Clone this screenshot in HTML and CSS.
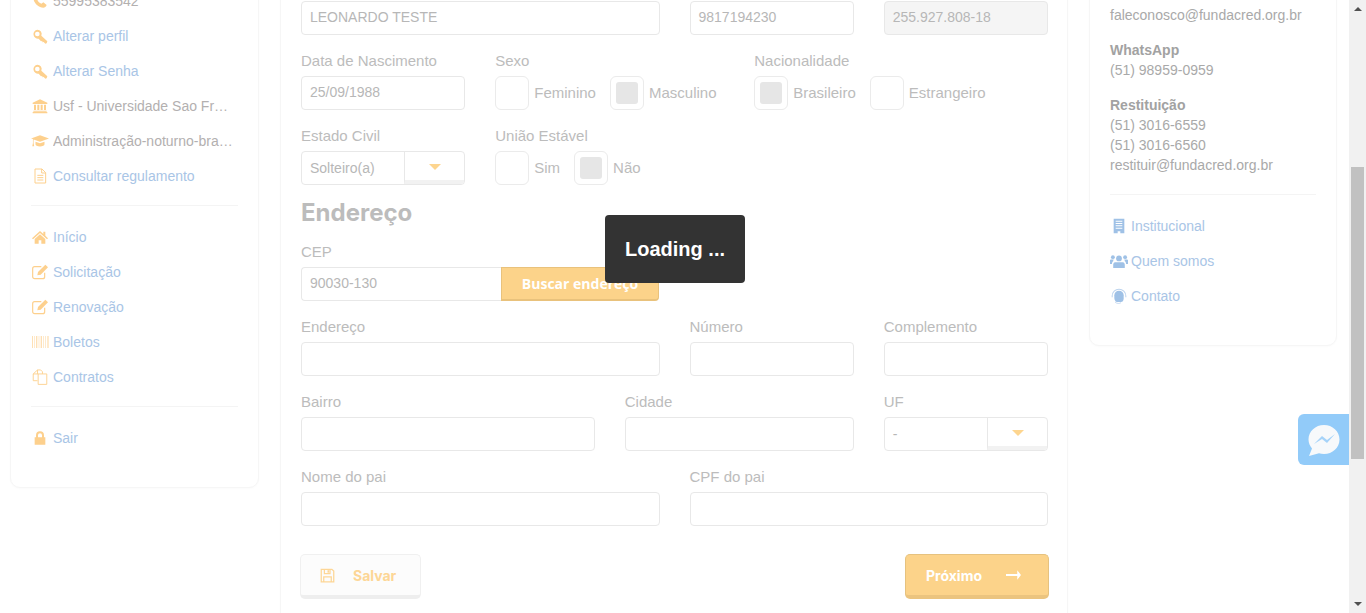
FILE: index.html
```html
<!DOCTYPE html>
<html lang="pt-BR">
<head>
    <meta charset="UTF-8">
    <title>Fundacred - Cadastro</title>
    <link rel="stylesheet" href="styles.css">
</head>
<body>
    <svg class="icon-defs" width="0" height="0">
        <symbol id="i-phone" viewBox="0 0 24 24"><path d="M6 2l4 5-2 3c1 3 3 5 6 6l3-2 5 4c-1 3-3 4-5 4C9 22 2 14 2 7c0-2 2-4 4-5z"/></symbol>
        <symbol id="i-key" viewBox="0 0 24 24"><path d="M8 1.5a6.5 6.5 0 0 1 6 9l9 8.500-1 3-2 .5-2.500-2.500-2 .5v-2l-2 .5-3.500-4A6.500 6.500 0 1 1 8 1.500zm0 3a3.500 3.500 0 1 0 0 7 3.500 3.500 0 0 0 0-7z" transform="translate(0 1)" fill-rule="evenodd"/></symbol>
        <symbol id="i-bank" viewBox="0 0 24 24"><path d="M12 2l11 5v2H1V7zM3 10h3v8H3zm5 0h3v8H8zm5 0h3v8h-3zm5 0h3v8h-3zM2 19h20v1.500H2zM1 21h22v2H1z"/></symbol>
        <symbol id="i-cap" viewBox="0 0 28 24"><path d="M14 3l14 5-14 5-10-3.500V15l1 5H2l1-5V9L0 8zM7 13l7 2.500 7-2.500v4c0 2-3 3.500-7 3.500S7 19 7 17z"/></symbol>
        <symbol id="i-doc" viewBox="0 0 24 24"><path d="M4.500 1.500H15L20.500 7v15.500h-16zM14.500 1.500V7.500h6M8 11h9M8 14.500h9M8 18h9" fill="none" stroke="currentColor" stroke-width="1.500"/></symbol>
        <symbol id="i-home" viewBox="0 0 24 24"><path d="M12 3l5 4.500V4h3v6.200l4 3.500-1.500 1.500L12 6 1.500 15.200 0 13.700zM4 15l8-7 8 7v7h-6v-5h-4v5H4z"/></symbol>
        <symbol id="i-edit" viewBox="0 0 26 24"><path d="M20 13v6a3 3 0 0 1-3 3H5a3 3 0 0 1-3-3V7a3 3 0 0 1 3-3h10" fill="none" stroke="currentColor" stroke-width="1.800"/><path d="M21 1l4 4-11 11-5 1 1-5z"/></symbol>
        <symbol id="i-barcode" viewBox="0 0 26 24"><path d="M1 3h1.500v18H1zm3 0h1v18H4zm3 0h2v18H7zm4 0h1v18h-1zm3 0h2v18h-2zm4 0h1v18h-1zm3 0h1v18h-1zm3 0h2v18h-2z" opacity=".65"/></symbol>
        <symbol id="i-files" viewBox="0 0 26 26"><path d="M9 1.500h5l3 3V8M9 1.500L2 8v11h7M9 1.500V8H2M9 8h9l6 0v17H10V8" fill="none" stroke="currentColor" stroke-width="1.500"/></symbol>
        <symbol id="i-lock" viewBox="0 0 24 24"><path d="M6 11V8a6 6 0 0 1 12 0v3h2v11H4V11zm3 0h6V8a3 3 0 0 0-6 0z" fill-rule="evenodd"/></symbol>
        <symbol id="i-building" viewBox="0 0 24 24"><path d="M4 1h16v22h-6v-3h-4v3H4zm3 3v1.500h10V4zm0 3.500V9h10V7.500zM7 11v1.500h10V11zm0 3.500V16h10v-1.500z" fill-rule="evenodd"/></symbol>
        <symbol id="i-users" viewBox="0 0 28 24"><circle cx="14" cy="8" r="4.500"/><circle cx="4.500" cy="6" r="3"/><circle cx="23.500" cy="6" r="3"/><path d="M8 14h12c2 0 3 2 3 4v5H5v-5c0-2 1-4 3-4zM0 11c0-1 1-1.500 2-1.500h4c-1 1-1 2-1 3-1 .5-2 2-2 4H0zM28 11c0-1-1-1.500-2-1.500h-4c1 1 1 2 1 3 1 .5 2 2 2 4h3z"/></symbol>
        <symbol id="i-headset" viewBox="0 0 24 24"><path d="M12 1a11 11 0 0 1 11 11v2h-1.500v-2a9.500 9.500 0 0 0-19 0v2H1v-2A11 11 0 0 1 12 1z" opacity=".7"/><path d="M12 4a7 7 0 0 1 7 7v5c0 3-2 5-4 5h-6c-2 0-4-3-4-6v-4a7 7 0 0 1 7-7z"/><path d="M6 21c3 3 7 2.500 9 1" fill="none" stroke="currentColor" stroke-width="1.200" opacity=".7"/></symbol>
        <symbol id="i-save" viewBox="0 0 24 24"><path d="M2 2h17l3 3v17H2zM7 2v7h9V2M6 22v-8h12v8" fill="none" stroke="currentColor" stroke-width="2"/><path d="M12 3.500h2.500v4H12z"/></symbol>
    </svg>

    <div class="page">
        <div class="columns">
            <aside class="card side-left">
                <a class="nav-row muted"><svg class="nav-icon"><use href="#i-phone"/></svg><span>55995383542</span></a>
                <a class="nav-row"><svg class="nav-icon"><use href="#i-key"/></svg><span>Alterar perfil</span></a>
                <a class="nav-row"><svg class="nav-icon"><use href="#i-key"/></svg><span>Alterar Senha</span></a>
                <a class="nav-row muted"><svg class="nav-icon"><use href="#i-bank"/></svg><span>Usf - Universidade Sao Francisco</span></a>
                <a class="nav-row muted"><svg class="nav-icon"><use href="#i-cap"/></svg><span>Administração-noturno-bragança</span></a>
                <a class="nav-row"><svg class="nav-icon"><use href="#i-doc"/></svg><span>Consultar regulamento</span></a>
                <hr class="divider">
                <a class="nav-row"><svg class="nav-icon"><use href="#i-home"/></svg><span>Início</span></a>
                <a class="nav-row"><svg class="nav-icon"><use href="#i-edit"/></svg><span>Solicitação</span></a>
                <a class="nav-row"><svg class="nav-icon"><use href="#i-edit"/></svg><span>Renovação</span></a>
                <a class="nav-row"><svg class="nav-icon"><use href="#i-barcode"/></svg><span>Boletos</span></a>
                <a class="nav-row"><svg class="nav-icon"><use href="#i-files"/></svg><span>Contratos</span></a>
                <hr class="divider">
                <a class="nav-row"><svg class="nav-icon"><use href="#i-lock"/></svg><span>Sair</span></a>
            </aside>

            <main class="card form-card">
                <div class="form-row">
                    <div class="field span-6"><div class="input">LEONARDO TESTE</div></div>
                    <div class="field span-3"><div class="input">9817194230</div></div>
                    <div class="field span-3"><div class="input disabled">255.927.808-18</div></div>
                </div>
                <div class="form-row">
                    <div class="field span-3"><label>Data de Nascimento</label><div class="input">25/09/1988</div></div>
                    <div class="field span-4">
                        <label>Sexo</label>
                        <div class="radios">
                            <span class="radio"></span><span class="radio-text">Feminino</span>
                            <span class="radio checked"></span><span class="radio-text">Masculino</span>
                        </div>
                    </div>
                    <div class="field span-5">
                        <label>Nacionalidade</label>
                        <div class="radios">
                            <span class="radio checked"></span><span class="radio-text">Brasileiro</span>
                            <span class="radio"></span><span class="radio-text">Estrangeiro</span>
                        </div>
                    </div>
                </div>
                <div class="form-row">
                    <div class="field span-3">
                        <label>Estado Civil</label>
                        <div class="select"><span class="select-value">Solteiro(a)</span><span class="select-btn"><i class="caret"></i></span></div>
                    </div>
                    <div class="field span-9">
                        <label>União Estável</label>
                        <div class="radios">
                            <span class="radio"></span><span class="radio-text">Sim</span>
                            <span class="radio checked"></span><span class="radio-text">Não</span>
                        </div>
                    </div>
                </div>

                <h2 class="section-title">Endereço</h2>

                <div class="form-row">
                    <div class="field span-6">
                        <label>CEP</label>
                        <div class="cep-group">
                            <div class="input">90030-130</div>
                            <button class="btn-search">Buscar endereço</button>
                        </div>
                    </div>
                </div>
                <div class="form-row">
                    <div class="field span-6"><label>Endereço</label><div class="input"></div></div>
                    <div class="field span-3"><label>Número</label><div class="input"></div></div>
                    <div class="field span-3"><label>Complemento</label><div class="input"></div></div>
                </div>
                <div class="form-row">
                    <div class="field span-5"><label>Bairro</label><div class="input"></div></div>
                    <div class="field span-4"><label>Cidade</label><div class="input"></div></div>
                    <div class="field span-3">
                        <label>UF</label>
                        <div class="select"><span class="select-value">-</span><span class="select-btn"><i class="caret"></i></span></div>
                    </div>
                </div>
                <div class="form-row">
                    <div class="field span-6"><label>Nome do pai</label><div class="input"></div></div>
                    <div class="field span-6"><label>CPF do pai</label><div class="input"></div></div>
                </div>

                <div class="form-actions">
                    <button class="btn btn-save"><svg class="btn-icon"><use href="#i-save"/></svg>Salvar</button>
                    <button class="btn btn-next">Próximo
                        <svg class="btn-arrow" viewBox="0 0 16 10"><path d="M0 4h12V0l4 5-4 5V6H0z"/></svg>
                    </button>
                </div>
            </main>

            <aside class="card side-right">
                <p class="info-line">faleconosco@fundacred.org.br</p>
                <div class="info-block">
                    <p class="info-title">WhatsApp</p>
                    <p class="info-line">(51) 98959-0959</p>
                </div>
                <div class="info-block">
                    <p class="info-title">Restituição</p>
                    <p class="info-line">(51) 3016-6559</p>
                    <p class="info-line">(51) 3016-6560</p>
                    <p class="info-line">restituir@fundacred.org.br</p>
                </div>
                <hr class="divider divider-info">
                <a class="nav-row blue"><svg class="nav-icon"><use href="#i-building"/></svg><span>Institucional</span></a>
                <a class="nav-row blue"><svg class="nav-icon"><use href="#i-users"/></svg><span>Quem somos</span></a>
                <a class="nav-row blue"><svg class="nav-icon"><use href="#i-headset"/></svg><span>Contato</span></a>
            </aside>
        </div>

        <div class="scrollbar">
            <i class="arrow-up"></i>
            <div class="scroll-thumb"></div>
            <i class="arrow-down"></i>
        </div>
    </div>

    <div class="chat-btn">
        <svg width="32" height="32" viewBox="0 0 32 32">
            <path d="M16 1c8.500 0 15.500 6.300 15.500 14.500S24.500 30 16 30c-1.800 0-3.500-.3-5-.8L1 32l3-7.500C2 22 .5 19 .5 15.500 .5 7.300 7.500 1 16 1z" fill="#f7f9fb"/>
            <path d="M6 20l8-8 5 4 8-6-8 9-5-4z" fill="#a6d3f9"/>
        </svg>
    </div>

    <div class="loading">Loading ...</div>
</body>
</html>
```
FILE: styles.css
```css
* { box-sizing: border-box; }

html, body {
    margin: 0;
    height: 613px;
    overflow: hidden;
}
body {
    background: #fff;
    font-family: "Liberation Sans", Arial, sans-serif;
    font-size: 14px;
    color: #b5b5b5;
}
.icon-defs { position: absolute; }

.page {
    display: flex;
    height: 613px;
}
.columns {
    flex: 1;
    display: flex;
    align-items: flex-start;
    gap: 21px;
    padding: 0 11px 0 10px;
    margin-top: -30px;
    min-width: 0;
}

/* cards */
.card {
    background: #fff;
    border: 1px solid #f6f6f6;
    border-radius: 10px;
    box-shadow: 0 1px 2px rgba(0, 0, 0, 0.02);
}
.side-left {
    width: 249px;
    flex: none;
    padding: 12px 20px 32px;
}
.side-right {
    width: 248px;
    flex: none;
    padding: 34px 20px 32px;
}
.form-card {
    width: 788px;
    flex: none;
    height: 700px;
    padding: 30px 20px 0;
    border-radius: 0;
}

/* side nav */
.nav-row {
    display: flex;
    align-items: center;
    gap: 4px;
    height: 35px;
    color: #a9c5e6;
}
.nav-row span {
    flex: 1;
    white-space: nowrap;
    overflow: hidden;
    text-overflow: ellipsis;
    padding-right: 5px;
}
.nav-row.muted { color: #b3b0b0; }
.nav-icon {
    flex: none;
    width: 18px;
    height: 16px;
    fill: #fdd08d;
    color: #fdd08d;
}
.blue { gap: 3px; }
.blue .nav-icon {
    fill: #9fc1e6;
    color: #9fc1e6;
}
.divider {
    border: 0;
    border-top: 1px solid #f4f4f4;
    margin: 12px 0 13px;
}
.divider-info { margin: 19px 0 13px; }

/* contact info */
.info-block { margin-top: 15px; }
.info-line, .info-title {
    margin: 0;
    line-height: 20px;
    color: #a9a9a9;
}
.info-title {
    font-weight: bold;
    color: #a2a2a2;
}

/* form */
.form-row {
    display: grid;
    grid-template-columns: repeat(12, 1fr);
    column-gap: 30px;
    width: 747px;
    margin-bottom: 16px;
}
.span-3 { grid-column: span 3; }
.span-4 { grid-column: span 4; }
.span-5 { grid-column: span 5; }
.span-6 { grid-column: span 6; }
.span-9 { grid-column: span 9; }

.field label {
    display: block;
    font-size: 15px;
    line-height: 20px;
    margin-bottom: 5px;
    color: #bcbcbc;
}
.input {
    height: 34px;
    line-height: 30px;
    padding: 0 8px;
    border: 1px solid #e8e8e8;
    border-radius: 4px;
    background: #fff;
    color: #b7b7b7;
}
.input.disabled { background: #f5f5f5; }

.radios {
    display: flex;
    align-items: center;
    height: 34px;
}
.radio {
    width: 34px;
    height: 34px;
    flex: none;
    border: 1px solid #ebebeb;
    border-radius: 6px;
    display: flex;
    align-items: center;
    justify-content: center;
}
.radio.checked::after {
    content: "";
    width: 22px;
    height: 22px;
    border-radius: 3px;
    background: #e6e6e6;
}
.radio-text {
    font-size: 15px;
    margin: -2px 14px 0 5px;
    color: #bcbcbc;
}

.select {
    display: flex;
    height: 34px;
    border: 1px solid #e8e8e8;
    border-radius: 4px;
    overflow: hidden;
}
.select-value {
    flex: 1;
    line-height: 32px;
    padding-left: 8px;
    color: #b7b7b7;
}
.select-btn {
    width: 60px;
    flex: none;
    display: flex;
    align-items: center;
    justify-content: center;
    border-left: 1px solid #e8e8e8;
    border-bottom: 4px solid #f2f2f2;
}
.caret {
    width: 0;
    height: 0;
    border: 6px solid transparent;
    border-top: 6px solid #fdd58f;
    border-bottom: 0;
    margin-top: 2px;
}

.section-title {
    margin: 0 0 17px;
    font-family: Inter, "Liberation Sans", sans-serif;
    font-size: 24px;
    line-height: 24px;
    font-weight: 700;
    color: #bcbcbc;
}

.cep-group { display: flex; }
.cep-group .input {
    width: 200px;
    flex: none;
    border-radius: 4px 0 0 4px;
    border-right: 0;
}
.btn-search {
    width: 158px;
    height: 34px;
    border: 1px solid #e9c27c;
    border-bottom-width: 2px;
    border-radius: 0 4px 4px 0;
    background: #fcd38a;
    color: #fff;
    font: bold 14px "Open Sans", sans-serif;
    padding: 0;
}

.form-actions {
    display: flex;
    justify-content: space-between;
    width: 749px;
    margin: 28px 0 0 -1px;
}
.btn {
    height: 45px;
    border-radius: 5px;
    font: 700 14px Inter, "Liberation Sans", sans-serif;
    padding: 0;
    display: flex;
    align-items: center;
}
.btn-save {
    width: 121px;
    padding-left: 19px;
    background: #fcfcfc;
    border: 1px solid #f0f0f0;
    border-bottom: 4px solid #eeeeee;
    color: #fdd696;
}
.btn-icon {
    width: 15px;
    height: 15px;
    margin-right: 18px;
    fill: #fdd696;
    color: #fdd696;
}
.btn-next {
    width: 144px;
    padding-left: 20px;
    background: #fcd38a;
    border: 1px solid #e6c27f;
    border-bottom: 4px solid #ebc47f;
    color: #fff;
}
.btn-arrow {
    width: 15px;
    height: 10px;
    margin-left: 24px;
    fill: #fff;
}

/* scrollbar */
.scrollbar {
    width: 17px;
    flex: none;
    height: 613px;
    background: #f1f1f1;
    display: flex;
    flex-direction: column;
    align-items: center;
}
.scroll-thumb {
    width: 13px;
    height: 292px;
    margin-top: 156px;
    background: #c1c1c1;
}
.arrow-up, .arrow-down {
    width: 0;
    height: 0;
    border: 4px solid transparent;
}
.arrow-up {
    border-bottom: 4px solid #505050;
    border-top: 0;
    margin-top: 7px;
}
.arrow-down {
    border-top: 4px solid #505050;
    border-bottom: 0;
    margin-top: auto;
    margin-bottom: 7px;
}

/* floating things over the page */
.chat-btn {
    position: absolute;
    left: 1298px;
    top: 414px;
    width: 51px;
    height: 51px;
    border-radius: 6px 0 0 6px;
    background: #92cbf9;
    display: flex;
    align-items: center;
    justify-content: center;
}
.loading {
    position: absolute;
    left: 605px;
    top: 215px;
    width: 140px;
    height: 68px;
    border-radius: 4px;
    background: #333;
    color: #fff;
    font-size: 20px;
    font-weight: bold;
    line-height: 68px;
    text-align: center;
}
```
